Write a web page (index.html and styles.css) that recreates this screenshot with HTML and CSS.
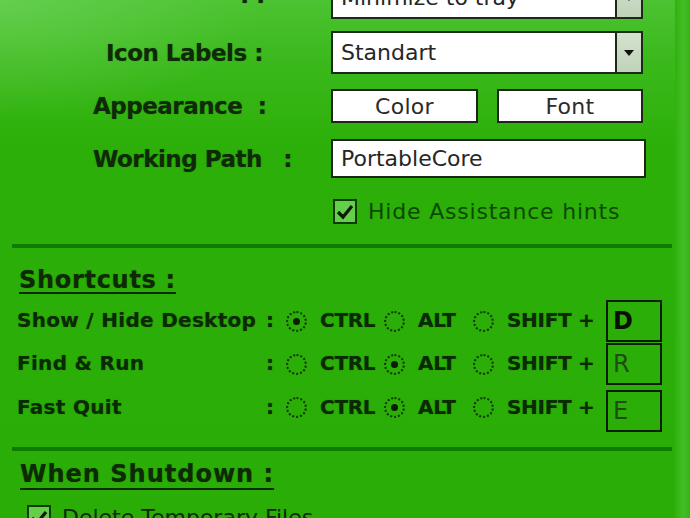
FILE: index.html
```html
<!DOCTYPE html>
<html lang="en">
<head>
    <meta charset="UTF-8">
    <title>PortableCore Settings</title>
    <link rel="stylesheet" href="styles.css">
</head>
<body>
    <div class="window">
        <div class="panel">
            <div class="settings">
                <div class="field field-first">
                    <span class="field-label label-close">On Close Main App</span>
                    <div class="select">
                        <span class="select-value">Minimize to tray</span>
                        <span class="select-arrow"></span>
                    </div>
                </div>
                <div class="field field-icons">
                    <span class="field-label label-icons">Icon Labels :</span>
                    <div class="select">
                        <span class="select-value">Standart</span>
                        <span class="select-arrow"></span>
                    </div>
                </div>
                <div class="field field-look">
                    <span class="field-label label-look">Appearance <span class="colon">:</span></span>
                    <div class="buttons">
                        <button class="btn btn-color">Color</button>
                        <button class="btn btn-font">Font</button>
                    </div>
                </div>
                <div class="field field-path">
                    <span class="field-label label-path">Working Path <span class="colon colon-wide">:</span></span>
                    <div class="text-input">PortableCore</div>
                </div>
                <div class="field field-hints">
                    <span></span>
                    <label class="check">
                        <span class="check-box">
                            <svg viewBox="0 0 20 20" width="20" height="20"><path d="M3 10 L8 15 L17 4" fill="none" stroke="#0a1a04" stroke-width="3.2"/></svg>
                        </span>
                        <span class="check-text">Hide Assistance hints</span>
                    </label>
                </div>
            </div>

            <div class="divider"></div>

            <h2 class="section-title title-shortcuts">Shortcuts :</h2>

            <div class="shortcut">
                <span class="shortcut-name">Show / Hide Desktop</span>
                <span class="shortcut-colon">:</span>
                <span class="radio checked"></span><span class="mod mod-ctrl">CTRL</span>
                <span class="radio"></span><span class="mod mod-alt">ALT</span>
                <span class="radio"></span><span class="mod mod-shift">SHIFT +</span>
                <div class="key key-bold">D</div>
            </div>
            <div class="shortcut shortcut-second">
                <span class="shortcut-name">Find &amp; Run</span>
                <span class="shortcut-colon">:</span>
                <span class="radio"></span><span class="mod mod-ctrl">CTRL</span>
                <span class="radio checked"></span><span class="mod mod-alt">ALT</span>
                <span class="radio"></span><span class="mod mod-shift">SHIFT +</span>
                <div class="key">R</div>
            </div>
            <div class="shortcut shortcut-third">
                <span class="shortcut-name">Fast Quit</span>
                <span class="shortcut-colon">:</span>
                <span class="radio"></span><span class="mod mod-ctrl">CTRL</span>
                <span class="radio checked"></span><span class="mod mod-alt">ALT</span>
                <span class="radio"></span><span class="mod mod-shift">SHIFT +</span>
                <div class="key">E</div>
            </div>

            <div class="divider divider-second"></div>

            <h2 class="section-title title-shutdown">When Shutdown :</h2>

            <label class="check check-shutdown">
                <span class="check-box">
                    <svg viewBox="0 0 20 20" width="20" height="20"><path d="M3 10 L8 15 L17 4" fill="none" stroke="#0a1a04" stroke-width="3.2"/></svg>
                </span>
                <span class="check-text">Delete Temporary Files</span>
            </label>
        </div>
        <div class="edge"></div>
    </div>
</body>
</html>
```

FILE: styles.css
```css
* {
    margin: 0;
    padding: 0;
    box-sizing: border-box;
}

body {
    font-family: 'DejaVu Sans', Verdana, sans-serif;
    background: #2aad06;
}

.window {
    display: flex;
    height: 518px;
    overflow: hidden;
    background:
        radial-gradient(ellipse 260px 120px at 0 0, rgba(120, 215, 100, 0.55), rgba(120, 215, 100, 0) 100%),
        linear-gradient(180deg, #4cc332 0%, #3bb91c 60px, #2caf08 150px, #2aad06 100%);
}

.panel {
    width: 675px;
    padding-left: 12px;
}

.edge {
    flex: 1;
    background: linear-gradient(90deg, #30b10e 0%, #44bd27 55%, #36b414 100%);
}

/* top settings form */
.settings {
    margin-top: -24px;
}

.field {
    display: grid;
    grid-template-columns: 319px 315px;
    align-items: center;
}

.field-first { height: 43px; }
.field-icons { height: 43px; margin-top: 12px; }
.field-look { height: 34px; margin-top: 15px; }
.field-path { height: 39px; margin-top: 16px; }
.field-hints { height: 25px; margin-top: 21px; }

.field-label {
    font-weight: bold;
    font-size: 23px;
    letter-spacing: -0.5px;
    color: #0e2a07;
    white-space: nowrap;
    text-shadow: 0 0 1px rgba(14, 42, 7, 0.5);
}

.label-close {
    padding-left: 26px;
    margin-bottom: 16px;
}
.label-icons { padding-left: 94px; }
.label-look { padding-left: 81px; }
.label-path { padding-left: 81px; }

.colon { margin-left: 8px; }
.colon-wide { margin-left: 14px; }

.select {
    display: flex;
    width: 312px;
    height: 43px;
    border: 2px solid #1d2917;
    background: #fff;
}

.select-value {
    flex: 1;
    display: flex;
    align-items: center;
    padding-left: 8px;
    font-size: 22px;
    color: #262626;
}

.select-arrow {
    width: 26px;
    border-left: 2px solid #1d2917;
    background: linear-gradient(180deg, #d3e2cf, #bfd3b9);
    display: flex;
    align-items: center;
    justify-content: center;
}

.select-arrow::after {
    content: "";
    border-left: 5px solid transparent;
    border-right: 5px solid transparent;
    border-top: 6px solid #111;
}

.buttons {
    display: flex;
    gap: 19px;
}

.btn {
    width: 147px;
    height: 34px;
    border: 2px solid #1b2616;
    background: #fff;
    font-family: 'DejaVu Sans', Verdana, sans-serif;
    font-size: 22px;
    letter-spacing: 0.3px;
    color: #2b2b2b;
}

.btn-font { width: 146px; }

.text-input {
    height: 39px;
    border: 2px solid #1b2616;
    background: #fff;
    padding-left: 8px;
    display: flex;
    align-items: center;
    font-size: 22px;
    color: #262626;
}

.check {
    display: flex;
    align-items: center;
    gap: 11px;
    margin-left: 2px;
}

.check-box {
    width: 24px;
    height: 25px;
    border: 2px solid #0d3a05;
    background: #63cf4b;
    display: flex;
    align-items: center;
    justify-content: center;
}

.check-text {
    font-size: 22px;
    letter-spacing: 0.8px;
    color: #0b4a02;
}

/* separators and headings */
.divider {
    width: 660px;
    height: 4px;
    margin-top: 20px;
    background: #0e7c00;
}

.divider-second { margin-top: 15px; }

.section-title {
    font-size: 24px;
    line-height: 28px;
    letter-spacing: 0.7px;
    color: #0d2a05;
    text-decoration: underline;
    text-decoration-thickness: 2px;
    text-underline-offset: 4px;
    padding-left: 7px;
    text-shadow: 0 0 1px rgba(13, 42, 5, 0.5);
}

.title-shortcuts {
    margin-top: 18px;
    margin-bottom: 6px;
}

.title-shutdown {
    margin-top: 9px;
    padding-left: 8px;
    letter-spacing: 1px;
    text-underline-offset: 6px;
}

/* shortcut rows */
.shortcut {
    display: flex;
    align-items: center;
    height: 42px;
    padding-left: 5px;
    font-weight: bold;
    font-size: 20px;
    color: #0a2a03;
    text-shadow: 0 0 1px rgba(10, 42, 3, 0.5);
}

.shortcut-second { margin-top: 1px; }
.shortcut-third { margin-top: 5px; }

.shortcut-name {
    width: 249px;
    letter-spacing: 0.3px;
    white-space: nowrap;
    margin-top: -2px;
}

.shortcut-colon {
    width: 20px;
    margin-top: -2px;
}

.mod {
    margin-top: -2px;
    letter-spacing: -0.3px;
}

.shortcut-third .shortcut-name,
.shortcut-third .shortcut-colon,
.shortcut-third .mod,
.shortcut-third .radio {
    margin-bottom: 7px;
}

.radio {
    width: 21px;
    height: 21px;
    border: 2px dotted #0c3305;
    border-radius: 50%;
    display: flex;
    align-items: center;
    justify-content: center;
    margin-right: 13px;
}

.radio.checked::after {
    content: "";
    width: 7px;
    height: 7px;
    border-radius: 50%;
    background: #0b1c05;
}

.mod-ctrl { width: 64px; }
.mod-alt { width: 55px; }
.mod-shift { width: 99px; }

.key {
    width: 56px;
    height: 42px;
    border: 2px solid #0c1c05;
    padding-left: 5px;
    display: flex;
    align-items: center;
    font-weight: normal;
    font-size: 24px;
    color: #1d4d10;
    text-shadow: none;
}

.key-bold {
    font-weight: bold;
    color: #0a0f05;
}

.check-shutdown {
    margin-top: 17px;
    margin-left: 15px;
}

.check-shutdown .check-text {
    color: #0d2a05;
    letter-spacing: 0;
}
```
